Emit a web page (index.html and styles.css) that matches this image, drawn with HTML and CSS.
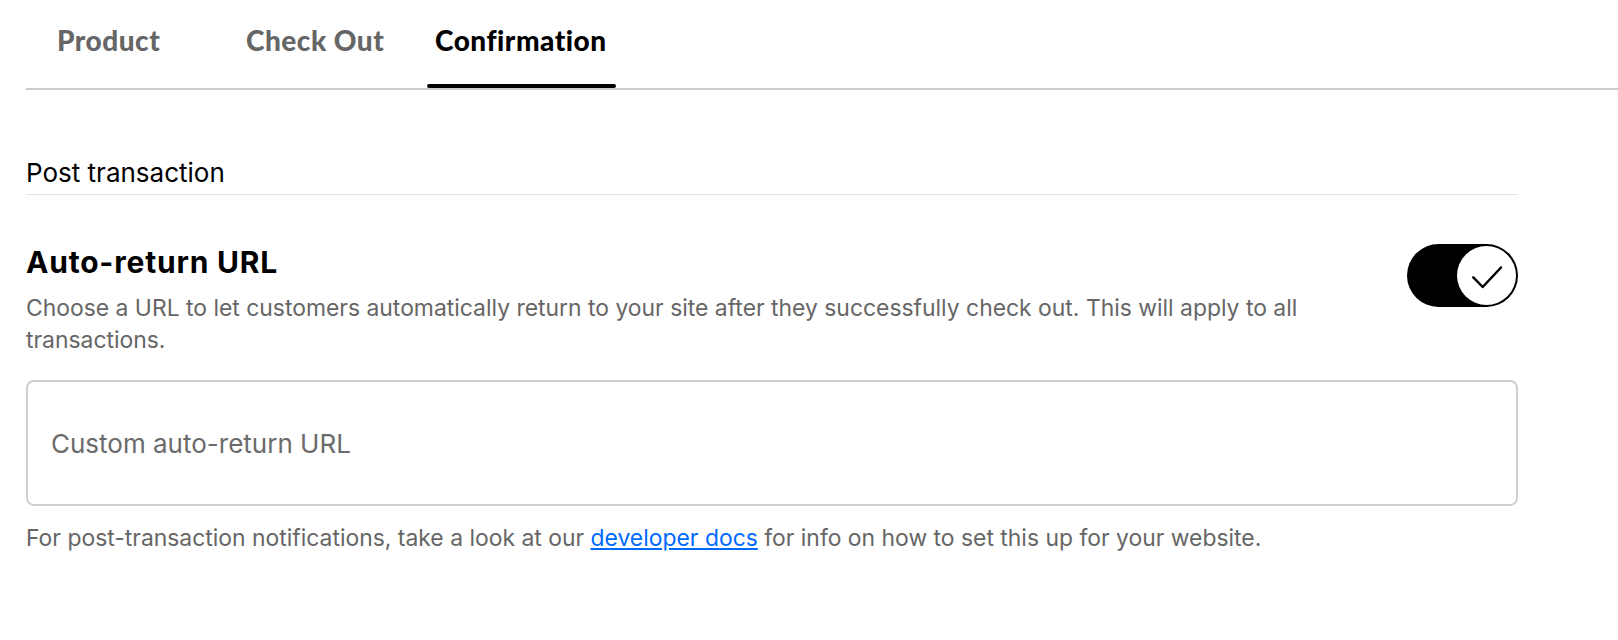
FILE: index.html
```html
<!DOCTYPE html>
<html lang="en">
<head>
    <meta charset="UTF-8">
    <meta name="viewport" content="width=device-width, initial-scale=1.0">
    <title>Checkout settings - Confirmation</title>
    <link rel="stylesheet" href="styles.css">
</head>
<body>

    <nav class="tabs">
        <a class="tab" href="#">Product</a>
        <a class="tab" href="#">Check Out</a>
        <a class="tab tab-active" href="#">Confirmation</a>
    </nav>

    <main class="content">
        <h2 class="section-title">Post transaction</h2>

        <div class="setting">
            <div class="setting-text">
                <h3 class="setting-name">Auto-return URL</h3>
                <p class="setting-desc">Choose a URL to let customers automatically return to your site after they successfully check out. This will apply to all transactions.</p>
            </div>
            <button class="toggle" type="button" aria-pressed="true" aria-label="Auto-return URL">
                <span class="toggle-knob">
                    <svg width="59" height="59" viewBox="0 0 59 59">
                        <polyline points="16.3,31.3 25.7,41 44,21.5" fill="none" stroke="#000" stroke-width="2.5" stroke-linecap="round" stroke-linejoin="round"/>
                    </svg>
                </span>
            </button>
        </div>

        <input class="url-input" type="text" placeholder="Custom auto-return URL">

        <p class="note">For post-transaction notifications, take a look at our <a href="#">developer docs</a> for info on how to set this up for your website.</p>
    </main>

</body>
</html>
```

FILE: styles.css
```css
/* Página de configuração do checkout */
body {
    font-family: Inter, "Noto Sans", sans-serif;
    margin: 0;
    padding: 0;
    color: #000;
    background: #fff;
}

.tabs {
    display: flex;
    margin-left: 26px;
    padding-left: 23px;
    border-bottom: 2px solid #cbcbcb;
}

.tab {
    position: relative;
    min-width: 189px;
    box-sizing: border-box;
    padding: 20px 8px 28px;
    font-family: Lato, sans-serif;
    font-weight: 900;
    font-size: 28px;
    letter-spacing: 0.5px;
    line-height: 40px;
    color: #666;
    text-decoration: none;
}

.tab-active {
    color: #000;
}

.tab-active::after {
    content: "";
    position: absolute;
    left: 0;
    right: 0;
    bottom: 0;
    height: 4px;
    border-radius: 2px;
    background: #000;
}

.content {
    padding: 0 100px 0 26px;
}

.section-title {
    margin: 67px 0 0;
    padding-bottom: 5px;
    border-bottom: 1px solid #e3e3e3;
    font-size: 26px;
    font-weight: 400;
    line-height: 32px;
}

.setting {
    display: flex;
    gap: 24px;
    align-items: flex-start;
    margin-top: 49px;
}

.setting-text {
    flex: 1;
}

.setting-name {
    margin: 0;
    font-size: 30px;
    font-weight: 700;
    letter-spacing: 0.8px;
    line-height: 36px;
}

.setting-desc {
    margin: 12px 0 0;
    font-size: 22.9px;
    line-height: 32px;
    color: #666;
}

.toggle {
    display: flex;
    justify-content: flex-end;
    width: 111px;
    height: 63px;
    padding: 2px;
    border: none;
    border-radius: 32px;
    background: #000;
    cursor: pointer;
}

.toggle-knob {
    width: 59px;
    height: 59px;
    border-radius: 50%;
    background: #fff;
}

.toggle-knob svg {
    display: block;
}

.url-input {
    display: block;
    box-sizing: border-box;
    width: 100%;
    height: 126px;
    margin-top: 24px;
    padding: 0 23px;
    border: 2px solid #d0d0d0;
    border-radius: 8px;
    font-family: Inter, "Noto Sans", sans-serif;
    font-size: 26px;
    color: #000;
    outline: none;
}

.url-input::placeholder {
    color: #6b6b6b;
}

.note {
    margin: 16px 0 0;
    font-size: 22.9px;
    line-height: 32px;
    color: #666;
}

.note a {
    color: #006aff;
}
```
